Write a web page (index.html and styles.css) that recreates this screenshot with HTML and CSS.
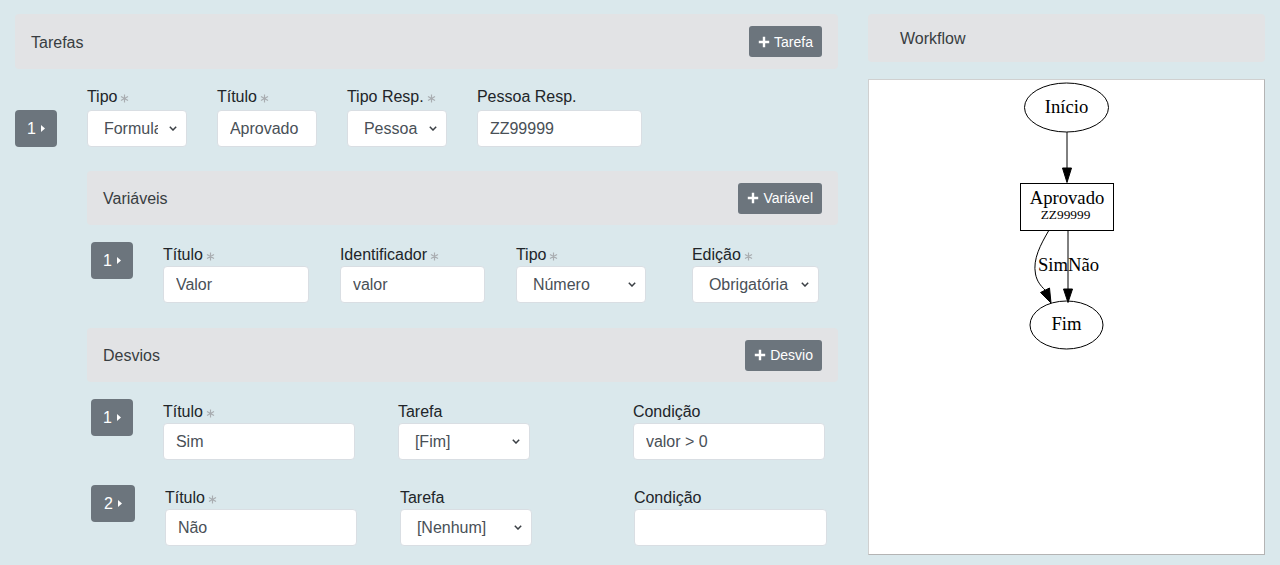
FILE: index.html
```html
<!DOCTYPE html>
<html lang="pt">
<head>
<meta charset="utf-8">
<title>Workflow</title>
<link rel="stylesheet" href="styles.css">
</head>
<body>
<div class="page">
  <section class="main">
    <div class="bar bar-top">
      <span class="bar-title">Tarefas</span>
      <button class="btn" type="button"><svg class="plus" viewBox="0 0 12 12" width="12" height="12"><path d="M6 0.8V11.2M0.8 6H11.2"/></svg>Tarefa</button>
    </div>

    <div class="row task-row">
      <span class="badge">1<svg class="caret" viewBox="0 0 4 7" width="4" height="7"><path d="M0 0L4 3.5L0 7Z"/></svg></span>
      <div class="field">
        <label class="lbl lbl-gap">Tipo<svg class="req" viewBox="0 0 10 10" width="9" height="9"><path d="M5 0.5V9.5M1.1 2.75L8.9 7.25M1.1 7.25L8.9 2.75"/></svg></label>
        <span class="sel w100"><select class="ctl"><option>Formulario</option></select><svg class="chev" viewBox="0 0 8 5" width="8" height="5"><path d="M0.8 0.8L4 4L7.2 0.8"/></svg></span>
      </div>
      <div class="field">
        <label class="lbl lbl-gap">Título<svg class="req" viewBox="0 0 10 10" width="9" height="9"><path d="M5 0.5V9.5M1.1 2.75L8.9 7.25M1.1 7.25L8.9 2.75"/></svg></label>
        <input class="ctl w100" type="text" value="Aprovado">
      </div>
      <div class="field">
        <label class="lbl lbl-gap">Tipo Resp.<svg class="req" viewBox="0 0 10 10" width="9" height="9"><path d="M5 0.5V9.5M1.1 2.75L8.9 7.25M1.1 7.25L8.9 2.75"/></svg></label>
        <span class="sel w100"><select class="ctl"><option>Pessoa</option></select><svg class="chev" viewBox="0 0 8 5" width="8" height="5"><path d="M0.8 0.8L4 4L7.2 0.8"/></svg></span>
      </div>
      <div class="field">
        <label class="lbl lbl-gap">Pessoa Resp.</label>
        <input class="ctl w165" type="text" value="ZZ99999">
      </div>
    </div>

    <div class="sub">
      <div class="bar">
        <span class="bar-title">Variáveis</span>
        <button class="btn" type="button"><svg class="plus" viewBox="0 0 12 12" width="12" height="12"><path d="M6 0.8V11.2M0.8 6H11.2"/></svg>Variável</button>
      </div>

      <div class="row item-row">
        <span class="badge">1<svg class="caret" viewBox="0 0 4 7" width="4" height="7"><path d="M0 0L4 3.5L0 7Z"/></svg></span>
        <div class="field col177">
          <label class="lbl">Título<svg class="req" viewBox="0 0 10 10" width="9" height="9"><path d="M5 0.5V9.5M1.1 2.75L8.9 7.25M1.1 7.25L8.9 2.75"/></svg></label>
          <input class="ctl w146" type="text" value="Valor">
        </div>
        <div class="field col176">
          <label class="lbl">Identificador<svg class="req" viewBox="0 0 10 10" width="9" height="9"><path d="M5 0.5V9.5M1.1 2.75L8.9 7.25M1.1 7.25L8.9 2.75"/></svg></label>
          <input class="ctl w145" type="text" value="valor">
        </div>
        <div class="field col176">
          <label class="lbl">Tipo<svg class="req" viewBox="0 0 10 10" width="9" height="9"><path d="M5 0.5V9.5M1.1 2.75L8.9 7.25M1.1 7.25L8.9 2.75"/></svg></label>
          <span class="sel w130"><select class="ctl"><option>Número</option></select><svg class="chev" viewBox="0 0 8 5" width="8" height="5"><path d="M0.8 0.8L4 4L7.2 0.8"/></svg></span>
        </div>
        <div class="field">
          <label class="lbl">Edição<svg class="req" viewBox="0 0 10 10" width="9" height="9"><path d="M5 0.5V9.5M1.1 2.75L8.9 7.25M1.1 7.25L8.9 2.75"/></svg></label>
          <span class="sel w127"><select class="ctl"><option>Obrigatória</option></select><svg class="chev" viewBox="0 0 8 5" width="8" height="5"><path d="M0.8 0.8L4 4L7.2 0.8"/></svg></span>
        </div>
      </div>

      <div class="bar bar-gap">
        <span class="bar-title">Desvios</span>
        <button class="btn" type="button"><svg class="plus" viewBox="0 0 12 12" width="12" height="12"><path d="M6 0.8V11.2M0.8 6H11.2"/></svg>Desvio</button>
      </div>

      <div class="row item-row">
        <span class="badge">1<svg class="caret" viewBox="0 0 4 7" width="4" height="7"><path d="M0 0L4 3.5L0 7Z"/></svg></span>
        <div class="field col235">
          <label class="lbl">Título<svg class="req" viewBox="0 0 10 10" width="9" height="9"><path d="M5 0.5V9.5M1.1 2.75L8.9 7.25M1.1 7.25L8.9 2.75"/></svg></label>
          <input class="ctl w192" type="text" value="Sim">
        </div>
        <div class="field col235">
          <label class="lbl">Tarefa</label>
          <span class="sel w132"><select class="ctl"><option>[Fim]</option></select><svg class="chev" viewBox="0 0 8 5" width="8" height="5"><path d="M0.8 0.8L4 4L7.2 0.8"/></svg></span>
        </div>
        <div class="field">
          <label class="lbl">Condição</label>
          <input class="ctl w192" type="text" value="valor &gt; 0">
        </div>
      </div>

      <div class="row item-row row-gap">
        <span class="badge badge-wide">2<svg class="caret" viewBox="0 0 4 7" width="4" height="7"><path d="M0 0L4 3.5L0 7Z"/></svg></span>
        <div class="field col235">
          <label class="lbl">Título<svg class="req" viewBox="0 0 10 10" width="9" height="9"><path d="M5 0.5V9.5M1.1 2.75L8.9 7.25M1.1 7.25L8.9 2.75"/></svg></label>
          <input class="ctl w192" type="text" value="Não">
        </div>
        <div class="field col234">
          <label class="lbl">Tarefa</label>
          <span class="sel w132"><select class="ctl"><option>[Nenhum]</option></select><svg class="chev" viewBox="0 0 8 5" width="8" height="5"><path d="M0.8 0.8L4 4L7.2 0.8"/></svg></span>
        </div>
        <div class="field">
          <label class="lbl">Condição</label>
          <input class="ctl w193" type="text" value="">
        </div>
      </div>
    </div>
  </section>

  <aside class="side">
    <div class="bar side-bar"><span class="bar-title">Workflow</span></div>
    <div class="graph">
      <svg class="graph-svg" viewBox="869 80 395 474" width="395" height="474">
        <g class="g-shape">
          <ellipse cx="1066.5" cy="107.5" rx="42" ry="24.5"/>
          <path d="M1067 132V168"/>
          <rect x="1020.5" y="183.5" width="93" height="47"/>
          <path d="M1048.5 231C1041 244 1032.5 259 1035.5 274C1037 281.5 1040.5 285.5 1045 290"/>
          <path d="M1068 231V289"/>
          <ellipse cx="1066.5" cy="325" rx="36.5" ry="24"/>
        </g>
        <g class="g-head">
          <polygon points="1062.5,168 1071.5,168 1067,182.5"/>
          <polygon points="1040.5,292.5 1049.5,288 1051,303"/>
          <polygon points="1063.5,289 1072.5,289 1068,302.5"/>
        </g>
        <g class="g-text">
          <text x="1066.5" y="113" text-anchor="middle">Início</text>
          <text x="1067" y="203.5" text-anchor="middle">Aprovado</text>
          <text class="g-small" x="1065.5" y="218.5" text-anchor="middle">ZZ99999</text>
          <text x="1068" y="270.5" text-anchor="end">Sim</text>
          <text x="1068" y="270.5">Não</text>
          <text x="1066.5" y="329.5" text-anchor="middle">Fim</text>
        </g>
      </svg>
    </div>
  </aside>
</div>
</body>
</html>
```
FILE: styles.css
```css
* { box-sizing: border-box; }

html, body {
  margin: 0;
  background: #dae8ec;
}

body {
  font-family: "Liberation Sans", Arial, sans-serif;
  font-size: 16px;
  line-height: 24px;
  color: #212529;
}

.page {
  display: grid;
  grid-template-columns: 823px 397px;
  column-gap: 30px;
  padding: 14px 15px 0 15px;
  height: 565px;
  overflow: hidden;
}

/* Section bars */
.bar {
  display: flex;
  align-items: center;
  justify-content: space-between;
  height: 54px;
  padding: 0 16px;
  background: #e2e3e5;
  border-radius: 4px;
}
.bar-top { height: 55px; }
.bar-gap { margin-top: 25px; }
.bar-title {
  color: #383d41;
  padding-top: 2px;
}

.side-bar {
  height: 48px;
  padding-left: 32px;
}

.btn {
  display: inline-flex;
  align-items: center;
  height: 31px;
  padding: 0 9px;
  border: 0;
  border-radius: 3px;
  background: #6c757d;
  color: #fff;
  font-family: "Liberation Sans", Arial, sans-serif;
  font-size: 14px;
  line-height: 1;
}
.plus {
  margin-right: 4px;
  fill: none;
  stroke: #fff;
  stroke-width: 2.4;
}

/* Rows */
.row {
  display: flex;
}
.task-row {
  margin-top: 15px;
  gap: 30px;
}
.task-row .badge { align-self: flex-end; }

.sub {
  margin-left: 72px;
  margin-top: 24px;
}
.item-row {
  margin-top: 17px;
  padding-left: 4px;
  align-items: flex-start;
}
.item-row .badge { margin-right: 30px; }
.row-gap { margin-top: 25px; }

.badge {
  display: inline-flex;
  align-items: center;
  height: 37px;
  padding: 0 12px;
  background: #6c757d;
  color: #fff;
  border-radius: 4px;
  font-size: 16px;
  flex: none;
}
.badge-wide { padding: 0 13px; }
.caret {
  margin-left: 5px;
  fill: #fff;
}

.field {
  display: flex;
  flex-direction: column;
  flex: none;
}
.col177 { width: 177px; }
.col176 { width: 176px; }
.col235 { width: 235px; }
.col234 { width: 234px; }

.lbl {
  display: block;
  height: 24px;
  padding-top: 1px;
  white-space: nowrap;
}
.lbl-gap { margin-bottom: 2px; }
.req {
  margin-left: 3px;
  vertical-align: -1px;
  fill: none;
  stroke: #a9adb1;
  stroke-width: 1.3;
}

/* Controls */
.ctl {
  display: block;
  height: 37px;
  margin: 0;
  padding: 0 12px;
  border: 1px solid #d9dee3;
  border-radius: 4px;
  background: #fff;
  color: #495057;
  font-family: "Liberation Sans", Arial, sans-serif;
  font-size: 16px;
  outline: none;
}

.sel {
  position: relative;
  display: block;
}
.sel .ctl {
  width: 100%;
  padding: 0 28px 0 16px;
  -webkit-appearance: none;
  appearance: none;
}
.chev {
  position: absolute;
  right: 10px;
  top: 16px;
  fill: none;
  stroke: #3a3f44;
  stroke-width: 1.5;
  pointer-events: none;
}

.w100 { width: 100px; }
.w127 { width: 127px; }
.w130 { width: 130px; }
.w132 { width: 132px; }
.w145 { width: 145px; }
.w146 { width: 146px; }
.w165 { width: 165px; }
.w192 { width: 192px; }
.w193 { width: 193px; }

/* Workflow graph */
.graph {
  margin-top: 17px;
  height: 476px;
  background: #fff;
  border: 1px solid #d0d0d0;
  border-right-color: #b4b4b4;
  border-bottom-color: #b4b4b4;
}
.graph-svg { display: block; }
.g-shape {
  fill: none;
  stroke: #000;
  stroke-width: 1;
}
.g-head {
  fill: #000;
  stroke: #000;
  stroke-width: 1;
}
.g-text {
  font-family: "Liberation Serif", "Times New Roman", serif;
  font-size: 18.67px;
  fill: #000;
}
.g-text .g-small { font-size: 13.33px; }
```
